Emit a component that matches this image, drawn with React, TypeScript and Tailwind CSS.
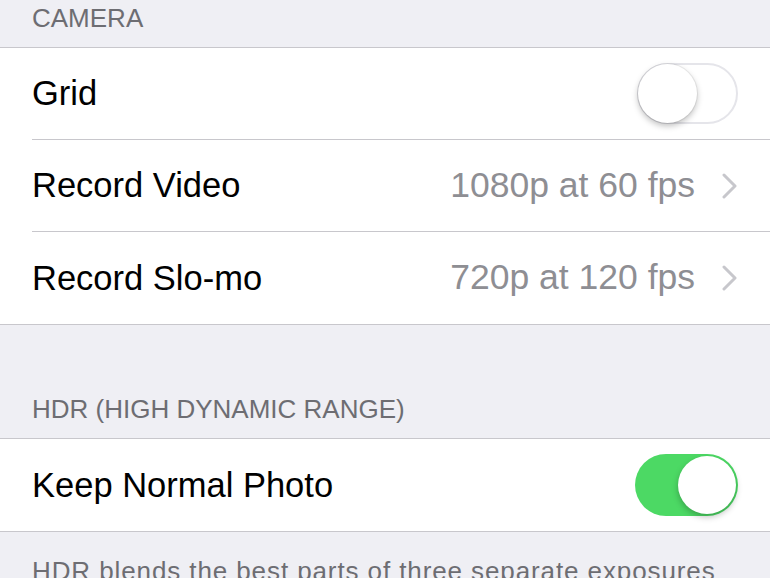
import React from "react";

const font = { fontFamily: '"Liberation Sans", Arial, sans-serif' };

function Toggle({ on }: { on: boolean }) {
  if (on) {
    return (
      <div className="relative h-[62px] w-[103px] rounded-full bg-[#4cd964]">
        <div className="absolute right-[2px] top-[2px] h-[58px] w-[58px] rounded-full bg-white shadow-[0_3px_6px_rgba(0,0,0,0.25)]" />
      </div>
    );
  }
  return (
    <div className="relative h-[61px] w-[101px] rounded-full border-2 border-[#e5e5ea] bg-white">
      <div className="absolute left-[-1px] top-[-1px] h-[59px] w-[59px] rounded-full bg-white shadow-[0_3px_6px_rgba(0,0,0,0.25),0_0_0_1px_rgba(0,0,0,0.06)]" />
    </div>
  );
}

function Chevron() {
  return (
    <svg width="16" height="26" viewBox="0 0 16 26" className="ml-[27px]">
      <path d="M2 2 L13 13 L2 24" fill="none" stroke="#c7c7cc" strokeWidth="3" strokeLinecap="round" strokeLinejoin="round" />
    </svg>
  );
}

function Row({ title, value, toggle, divider }: { title: string; value?: string; toggle?: boolean; divider?: boolean }) {
  return (
    <div className="pl-[32px]">
      <div className={"flex h-[92px] items-center pr-[32px]" + (divider ? " border-b border-[#c8c7cc]" : "")}>
        <span className="flex-1 text-[34.5px] leading-none text-black">{title}</span>
        {value !== undefined && (
          <>
            <span className="text-[35.5px] leading-none text-[#8e8e93]">{value}</span>
            <Chevron />
          </>
        )}
        {toggle !== undefined && <Toggle on={toggle} />}
      </div>
    </div>
  );
}

function Header({ text, h }: { text: string; h: string }) {
  return (
    <div className={"flex items-end px-[32px] pb-[16px] " + h}>
      <span className="text-[26px] leading-none text-[#6d6d72]">{text}</span>
    </div>
  );
}

export default function App() {
  return (
    <div className="h-[578px] w-[770px] overflow-hidden bg-[#efeff4]" style={font}>
      <Header text="CAMERA" h="h-[47px]" />
      <div className="border-y border-[#c8c7cc] bg-white">
        <Row title="Grid" toggle={false} divider />
        <Row title="Record Video" value="1080p at 60 fps" divider />
        <Row title="Record Slo-mo" value="720p at 120 fps" />
      </div>
      <Header text="HDR (HIGH DYNAMIC RANGE)" h="h-[113px]" />
      <div className="border-y border-[#c8c7cc] bg-white">
        <Row title="Keep Normal Photo" toggle={true} />
      </div>
      <div className="px-[32px] pt-[26px]">
        <p className="whitespace-nowrap text-[26px] leading-none tracking-[0.9px] text-[#6d6d72]">
          HDR blends the best parts of three separate exposures
        </p>
      </div>
    </div>
  );
}
